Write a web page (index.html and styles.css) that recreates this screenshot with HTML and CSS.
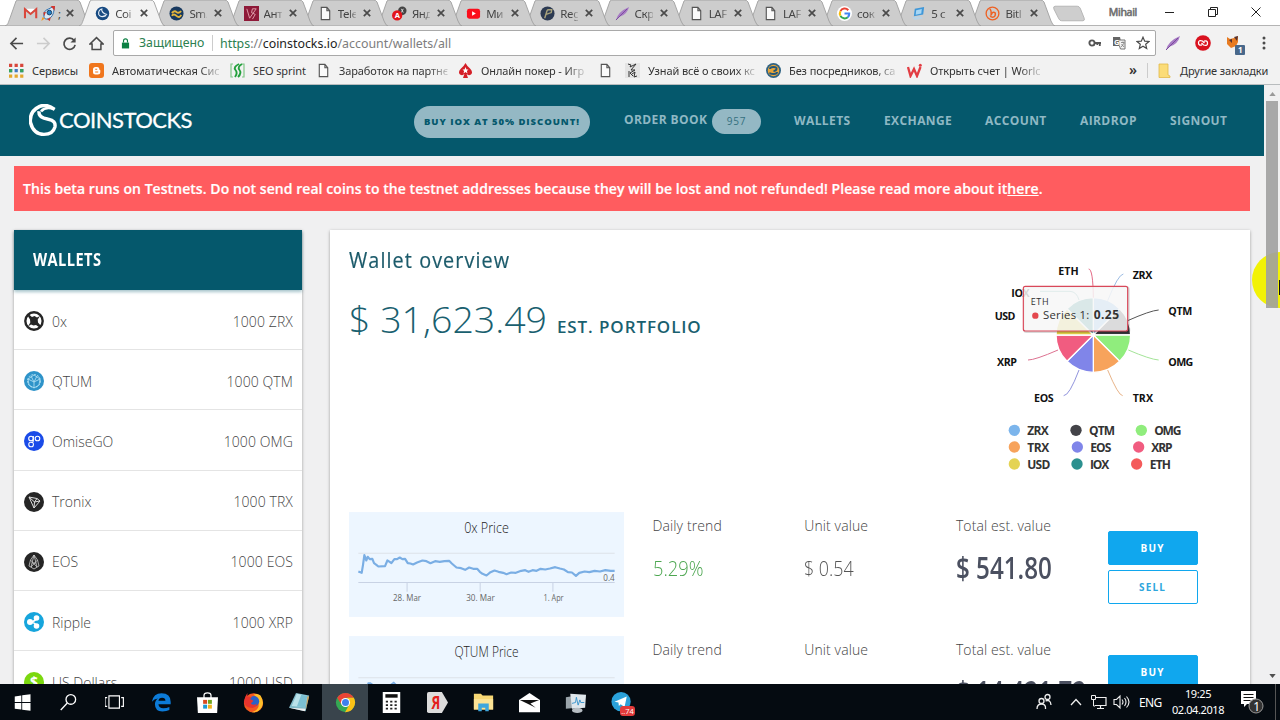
FILE: index.html
```html
<!DOCTYPE html>
<html lang="ru">
<head>
<meta charset="utf-8">
<title>Coinstocks</title>
<link rel="stylesheet" href="styles.css">
</head>
<body>
<svg class="defs" width="0" height="0">
  <symbol id="tab" viewBox="0 0 86 26"><path d="M0 26C3 25 3 23 5 18L11 1Q12 0 14 0H71Q74 0 75 2L82 21Q84 26 86 26Z"/></symbol>
  <symbol id="x" viewBox="0 0 8 8"><path d="M.8.8l6.4 6.4M7.2.8L.8 7.2" stroke="#4a4a4a" stroke-width="1.7"/></symbol>
  <symbol id="doc" viewBox="0 0 16 16"><path d="M3.500 1.500h6l3 3.500v9.500h-9zM9.500 1.500v3.500h3" fill="#fafafa" stroke="#555" stroke-width="1.2"/></symbol>
  <symbol id="feather" viewBox="0 0 16 16"><path d="M1 15Q3 6 15 1Q13 9 5 11.500Z" fill="#a77bc4"/><path d="M1 15L13 3" stroke="#7a4a9d"/></symbol>
</svg>
<div class="browser">
  <div class="tabstrip">
    <div class="tabs">
      <div class="tab"><svg class="shape"><use href="#tab"/></svg><svg class="ico wide" viewBox="0 0 34 16"><path d="M1.500 13V3.500L7.500 8.500 13.500 3.500V13" fill="none" stroke="#d9473c" stroke-width="2.200"/><path d="M3 3h9l-4.500 4z" fill="#fff"/><path d="M22 13Q20 5 27 3L33 0 32 7Q30 14 24 14Z" fill="#dce8f2" stroke="#2b6fae"/><circle cx="27.500" cy="7" r="2.500" fill="#2584c7" stroke="#173b63"/><path d="M29 0l4.500 0-.5 5z" fill="#d8342b"/><path d="M21 7l3-1-2 5zM25 14l4-2-1 4z" fill="#c9352c"/><path d="M20 12l3 1-4 3z" fill="#f49a25"/></svg><span>;</span><svg class="close"><use href="#x"/></svg></div>
      <div class="tab active"><svg class="shape"><use href="#tab"/></svg><svg class="ico" viewBox="0 0 16 16"><circle cx="8" cy="8" r="7.200" fill="#174a82"/><path d="M8 3Q3 4 4 9Q6 13 12 10M7 3Q7 8 13 9" fill="none" stroke="#e5eef7" stroke-width="1.200"/></svg><span>Coi</span><svg class="close"><use href="#x"/></svg></div>
      <div class="tab"><svg class="shape"><use href="#tab"/></svg><svg class="ico" viewBox="0 0 16 16"><circle cx="8" cy="8" r="7.500" fill="#17395f"/><path d="M3 7.500q3-3 5-1t5-1M3 10.500q2-3 5 0t5-1" fill="none" stroke="#e2b43c" stroke-width="2"/></svg><span>Sm.</span><svg class="close"><use href="#x"/></svg></div>
      <div class="tab"><svg class="shape"><use href="#tab"/></svg><svg class="ico" viewBox="0 0 16 16"><path d="M0 0h16v16H0z" fill="#8e1938"/><path d="M3 3l3 10L13 3H9l-1 4 4 2-3 5" fill="none" stroke="#e0a0ad"/></svg><span>Ант</span><svg class="close"><use href="#x"/></svg></div>
      <div class="tab"><svg class="shape"><use href="#tab"/></svg><svg class="ico"><use href="#doc"/></svg><span>Tele</span><svg class="close"><use href="#x"/></svg></div>
      <div class="tab"><svg class="shape"><use href="#tab"/></svg><svg class="ico" viewBox="0 0 16 16"><circle cx="11" cy="5" r="4.500" fill="#444"/><path d="M10 3l2 4M12 3l-2 4" stroke="#ddd"/><circle cx="5.500" cy="10" r="5.500" fill="#e3141b"/><text x="2.800" y="13" font-size="8" fill="#fff" font-weight="700">A</text></svg><span>Янд</span><svg class="close"><use href="#x"/></svg></div>
      <div class="tab"><svg class="shape"><use href="#tab"/></svg><svg class="ico" viewBox="0 0 16 16"><rect x="1" y="3" width="14" height="10.500" rx="2.500" fill="#fb0d1b"/><path d="M6.500 5.500v5l4-2.500z" fill="#fff"/></svg><span>Ми</span><svg class="close"><use href="#x"/></svg></div>
      <div class="tab"><svg class="shape"><use href="#tab"/></svg><svg class="ico" viewBox="0 0 16 16"><circle cx="8" cy="8" r="7.500" fill="#2c3a52"/><path d="M5 13L7.500 5Q8 4 9 4H12.500L12 7 6.500 9" fill="none" stroke="#a8a27c" stroke-width="1.500"/></svg><span>Reg</span><svg class="close"><use href="#x"/></svg></div>
      <div class="tab"><svg class="shape"><use href="#tab"/></svg><svg class="ico"><use href="#feather"/></svg><span>Скр</span><svg class="close"><use href="#x"/></svg></div>
      <div class="tab"><svg class="shape"><use href="#tab"/></svg><svg class="ico"><use href="#doc"/></svg><span>LAF</span><svg class="close"><use href="#x"/></svg></div>
      <div class="tab"><svg class="shape"><use href="#tab"/></svg><svg class="ico"><use href="#doc"/></svg><span>LAF</span><svg class="close"><use href="#x"/></svg></div>
      <div class="tab"><svg class="shape"><use href="#tab"/></svg><svg class="ico" viewBox="0 0 16 16"><circle cx="8" cy="8" r="8" fill="#fff"/><g fill="none" stroke-width="2.200"><path d="M12 4.500A5 5 0 0 0 3.700 5.500" stroke="#ea4335"/><path d="M3.700 5.500a5 5 0 0 0 0 5" stroke="#fbbc05"/><path d="M3.700 10.500A5 5 0 0 0 11.500 12" stroke="#34a853"/><path d="M11.500 12A5 5 0 0 0 13 8H8" stroke="#4285f4"/></g></svg><span>сок</span><svg class="close"><use href="#x"/></svg></div>
      <div class="tab"><svg class="shape"><use href="#tab"/></svg><svg class="ico" viewBox="0 0 16 16"><path d="M4 3l10-2-1 8-10 2z" fill="#3f97d8"/><path d="M5.500 4.500l6-1.200-.5 4.700-6 1.200z" fill="#a7d6f4"/><path d="M1 12l9-1 3 2-9 2z" fill="#b9d3e6"/></svg><span>5 с</span><svg class="close"><use href="#x"/></svg></div>
      <div class="tab"><svg class="shape"><use href="#tab"/></svg><svg class="ico" viewBox="0 0 16 16"><circle cx="8" cy="8" r="6.800" fill="none" stroke="#ee6123" stroke-width="1.400"/><path d="M5 3q2 1 1.500 7Q8 5 11 7.500 11.500 12 8 12 6 12 5.500 10" fill="none" stroke="#ee6123" stroke-width="1.600"/></svg><span>Bitl</span><svg class="close"><use href="#x"/></svg></div>
    </div>
    <svg class="newtab" viewBox="0 0 34 17"><path d="M2 1H25Q27 1 28 3L32 13Q33 16 31 16H9Q7 16 6 14L1 4Q0 1 2 1Z" fill="#cecece" stroke="#b5b5b5"/></svg>
    <div class="winctl"><span class="user">Mihail</span>
      <svg width="12" height="12"><path d="M1 6.500h9" stroke="#222" /></svg>
      <svg width="12" height="12"><path d="M1.500 3.500h7v7h-7zM3.500 3V1.500h7v7H9" fill="none" stroke="#222"/></svg>
      <svg width="12" height="12"><path d="M1.500 1.500l9 9M10.500 1.500l-9 9" stroke="#222"/></svg>
    </div>
  </div>
  <div class="toolbar">
    <div class="navbtns">
      <svg viewBox="0 0 16 16"><path d="M15 8H2.500M8 2L2 8l6 6" fill="none" stroke="#4a4a4a" stroke-width="1.700"/></svg>
      <svg viewBox="0 0 16 16"><path d="M1 8h12.500M8 2l6 6-6 6" fill="none" stroke="#ccc" stroke-width="1.700"/></svg>
      <svg viewBox="0 0 16 16"><path d="M13 4.800A6 6 0 1 0 14 9.500" fill="none" stroke="#4a4a4a" stroke-width="1.800"/><path d="M14.500 1.500v5.500H9z" fill="#4a4a4a"/></svg>
      <svg viewBox="0 0 16 16"><path d="M1 8.500L8 1.700l7 6.800H12.700V14.500H3.300V8.500Z" fill="none" stroke="#4a4a4a" stroke-width="1.600"/></svg>
    </div>
    <div class="omnibox">
      <svg class="lock" viewBox="0 0 10 12"><path d="M1 5h8v6.500H1z" fill="#0b8043"/><path d="M2.800 5V3a2.200 2.200 0 0 1 4.400 0v2" fill="none" stroke="#0b8043" stroke-width="1.300"/></svg>
      <span class="secure">Защищено</span><span class="url"><b>https</b>://<i>coinstocks.io</i>/account/wallets/all</span>
      <div class="omni-icons">
        <svg viewBox="0 0 14 14"><circle cx="4" cy="7" r="2.600" fill="none" stroke="#555" stroke-width="1.900"/><path d="M6.500 7H13M11.800 7v3M9.300 7v2" stroke="#555" stroke-width="1.800"/></svg>
        <svg viewBox="0 0 14 14"><path d="M1 1h7l2 9H1z" fill="#666"/><path d="M7 4h6v9H8.500L7.500 10" fill="#f2f2f2" stroke="#777"/><text x="2" y="8.500" font-size="7.500" font-weight="700" fill="#fff">G</text><path d="M9 6.500h3.500M11 5.500v1M9.200 11l3-4M9.500 8l2.500 3" stroke="#777" stroke-width=".8"/></svg>
        <svg viewBox="0 0 14 14"><path d="M7 1.200l1.700 4 4.300.3-3.300 2.800 1 4.200L7 10.200l-3.700 2.300 1-4.200L1 5.500l4.300-.3z" fill="none" stroke="#4a4a4a" stroke-width="1.200"/></svg>
      </div>
    </div>
    <div class="exts">
      <svg viewBox="0 0 16 16"><use href="#feather"/></svg>
      <svg viewBox="0 0 16 16"><circle cx="8" cy="8" r="7.800" fill="#d9121f"/><path d="M7 9.800Q3.500 11 3.500 7.800T7.500 6l2 2M9 6.200Q12.500 5 12.500 8.200T8.500 10l-2-2" fill="none" stroke="#fff" stroke-width="1.300"/></svg>
      <svg viewBox="0 0 20 20"><path d="M1 2l3 2 4-1 4-2 0 6-2 4-5 2-4-4z" fill="#e77b22"/><path d="M3 5l3-1v4zM8 2l4-1-1 5z" fill="#533"/><rect x="9" y="10" width="10" height="10" rx="1" fill="#48688b"/><text x="12" y="18" font-size="8" font-weight="700" fill="#fff">1</text></svg>
      <svg viewBox="0 0 16 16"><g fill="#4a4a4a"><circle cx="8" cy="3" r="1.500"/><circle cx="8" cy="8" r="1.500"/><circle cx="8" cy="13" r="1.500"/></g></svg>
    </div>
  </div>
  <div class="bookmarks">
    <div class="bm b1"><svg viewBox="0 0 14 14"><g stroke-width="3" stroke-dasharray="3 2.200"><path d="M0 2.200h14" stroke="#d8463b"/><path d="M0 7.200h14" stroke="#3f78c4"/><path d="M0 12.200h14" stroke="#e3a72e"/></g><path d="M0 5.700h3v3H0zM10.400 5.700h3v3h-3z" fill="#35a35b"/></svg><span>Сервисы</span></div>
    <div class="bm b2"><svg viewBox="0 0 15 15"><rect width="15" height="15" rx="3" fill="#f0761d"/><path d="M4 6.500A2.500 2.500 0 0 1 6.500 4H8a2.300 2.300 0 0 1 2.300 2.500l1 .8V9A2.500 2.500 0 0 1 8.800 11.500H6.500A2.500 2.500 0 0 1 4 9z" fill="#fff"/><path d="M6.200 6.300h2M6.200 9h3" stroke="#f0761d" stroke-width="1.100"/></svg><span>Автоматическая Сис</span></div>
    <div class="bm b3"><svg viewBox="0 0 15 15"><path d="M3 1H1v13h2M12 1h2v13h-2" fill="none" stroke="#80c587" stroke-width="1.200"/><path d="M9 1Q3 4 5.500 7T5 14M12 1Q7 4 9.500 7T8 14" fill="none" stroke="#23a03c" stroke-width="1.900"/></svg><span>SEO sprint</span></div>
    <div class="bm b4"><svg><use href="#doc"/></svg><span>Заработок на партнє</span></div>
    <div class="bm b5"><svg viewBox="0 0 15 15"><path d="M7.500 0Q9 3 12 5.500 15.500 9 13 11.500 10.500 13 8.600 11L10 15H5l1.400-4Q4.500 13 2 11.500-.5 9 3 5.500 6 3 7.500 0z" fill="#d41f27"/><path d="M7.500 4l1 2.500h2l-1.600 1.600.6 2.400-2-1.400-2 1.400.6-2.400L4.500 6.500h2z" fill="#fff"/></svg><span>Онлайн покер - Игр</span></div>
    <div class="bm b6"><svg><use href="#doc"/></svg></div>
    <div class="bm b7"><svg viewBox="0 0 15 15"><path d="M0 0h15v15H0z" fill="#e4e4e4"/><path d="M3 1l3 1-1 2 6-3-5 6 4 0-5 3 3 3M4 8v6M7 11l3-2-1 5 3-1" fill="none" stroke="#333" stroke-width="1"/></svg><span>Узнай всё о своих кс</span></div>
    <div class="bm b8"><svg viewBox="0 0 15 15"><circle cx="7.500" cy="7.500" r="7.500" fill="#2f6384"/><circle cx="7.500" cy="7.500" r="5.700" fill="#e8a53a"/><path d="M4 6q0-2 3.500-2t3 2-3 2M11 9q0 2-3.500 2T4 9.500" fill="none" stroke="#235778" stroke-width="2"/></svg><span>Без посредников, са</span></div>
    <div class="bm b9"><svg viewBox="0 0 15 15"><path d="M1 4l2.500 9L7 6l3 7 3.500-9" fill="none" stroke="#e23d43" stroke-width="2.300"/><circle cx="13.300" cy="2.300" r="1.500" fill="#e23d43"/></svg><span>Открыть счет | Worlc</span></div>
    <div class="more">»</div>
    <div class="bm b10"><svg viewBox="0 0 15 15"><path d="M2 1h9v11l2 1v1.500H2z" fill="#fbdc78" stroke="#e2b94a" stroke-width=".8"/></svg><span>Другие закладки</span></div>
  </div>

  <div class="viewport">
    <div class="page">
      <header class="site">
        <div class="logo"><svg viewBox="0 0 90 100"><path d="M77 16Q55-1 32 7 0 22 4 56 13 92 45 92 72 92 78 70 82 50 58 46L45 43Q28 37 30 22" fill="none" stroke="#fff" stroke-width="10.500"/><path d="M77 16Q50 6 36 22" fill="none" stroke="#fff" stroke-width="8"/></svg><span>COINSTOCKS</span></div>
        <nav><a class="promo"><span>BUY IOX AT 50% DISCOUNT!</span></a><a class="ob"><span>ORDER BOOK</span><em>957</em></a><a class="n1">WALLETS</a><a class="n2">EXCHANGE</a><a class="n3">ACCOUNT</a><a class="n4">AIRDROP</a><a class="n5">SIGNOUT</a></nav>
      </header>
      <div class="alert"><span>This beta runs on Testnets. Do not send real coins to the testnet addresses because they will be lost and not refunded! Please read more about it<u>here</u>.</span></div>
      <div class="cols">
        <aside>
          <h2><span>WALLETS</span></h2>
          <div class="w"><svg viewBox="0 0 20 20"><circle cx="10" cy="10" r="8.700" fill="#fff" stroke="#262626" stroke-width="2.400"/><path d="M3.500 4.500L5 3.500 8 6 10.500 5 13 6.500 16 5 13.700 8.500 14 11.500 17 15 15.500 16.500 12 14 9.500 14.500 7 13.500 4 15.500 6.300 11.500 6 8.500z" fill="#262626"/></svg><span>0x</span><b>1000 ZRX</b></div>
          <div class="w"><svg viewBox="0 0 20 20"><circle cx="10" cy="10" r="10" fill="#2e93c9"/><g fill="none" stroke="#a9dcf2" stroke-width=".9"><circle cx="10" cy="10" r="6.500" stroke-dasharray="2 1"/><path d="M4 8l6-4 6 4-1 6-5 3-5-3zM4 8l6 3 6-3M10 11v6M7 5l3 6 3-6"/></g></svg><span>QTUM</span><b>1000 QTM</b></div>
          <div class="w"><svg viewBox="0 0 20 20"><circle cx="10" cy="10" r="10" fill="#1a4be8"/><g fill="none" stroke="#fff" stroke-width="1.100"><circle cx="7" cy="7.500" r="2.300"/><circle cx="13.500" cy="7.500" r="2.300"/><rect x="4.800" y="11.300" width="4.600" height="4.500" rx="2"/><path d="M9.300 5v5q0 1.500-2 1.500"/></g></svg><span>OmiseGO</span><b>1000 OMG</b></div>
          <div class="w"><svg viewBox="0 0 20 20"><circle cx="10" cy="10" r="10" fill="#252525"/><path d="M5 5l8 1.500 3 2.500-6 7zM5 5l5.500 5L10 16M10.500 10L13 6.500M10.500 10L16 9" fill="none" stroke="#ddd" stroke-width="1"/></svg><span>Tronix</span><b>1000 TRX</b></div>
          <div class="w"><svg viewBox="0 0 20 20"><circle cx="10" cy="10" r="10" fill="#252525"/><path d="M10 3l-3.500 5L5 14l5 3 5-3-1.500-6zM10 3L7 15M10 3l3 12M6.500 8L13 15M13.500 8L7 15M8 11h4" fill="none" stroke="#ccc" stroke-width=".8"/></svg><span>EOS</span><b>1000 EOS</b></div>
          <div class="w"><svg viewBox="0 0 20 20"><circle cx="10" cy="10" r="10" fill="#16a5dc"/><g fill="#fff"><circle cx="6" cy="10" r="3"/><circle cx="12.500" cy="6" r="2.800"/><circle cx="12.500" cy="14" r="2.800"/></g><path d="M12.300 6Q11.500 9.500 6 10q5.500.5 6.300 4" fill="none" stroke="#fff" stroke-width="1.500"/></svg><span>Ripple</span><b>1000 XRP</b></div>
          <div class="w"><svg viewBox="0 0 20 20"><circle cx="10" cy="10" r="10" fill="#7bd80f"/><text x="6" y="15" font-size="14" font-weight="700" fill="#fff">$</text></svg><span>US Dollars</span><b>1000 USD</b></div>
        </aside>
        <main>
          <section class="overview">
            <div class="sum"><h1><span>Wallet overview</span></h1><div class="total"><span class="amt">$ 31,623.49</span><span class="est">EST. PORTFOLIO</span></div></div>
            <svg class="pie" viewBox="0 0 840 690">
              <g stroke="#fff" stroke-width="4">
                <path d="M400 255V143A112 112 0 0 1 479 176Z" fill="#7cb5ec"/><path d="M400 255L479 176A112 112 0 0 1 512 255Z" fill="#35353a"/><path d="M400 255H512A112 112 0 0 1 479 334Z" fill="#90ed7d"/><path d="M400 255L479 334A112 112 0 0 1 400 367Z" fill="#f7a35c"/><path d="M400 255V367A112 112 0 0 1 321 334Z" fill="#8085e9"/><path d="M400 255L321 334A112 112 0 0 1 288 255Z" fill="#f15c80"/><path d="M400 255H288A112 112 0 0 1 321 176Z" fill="#dcca45"/><path d="M400 255L321 176A112 112 0 0 1 400 143Z" fill="#2b908f"/>
              </g>
              <g fill="none" stroke-width="3"><path d="M386 57Q399 57 400 143" stroke="#e46a86"/><path d="M490 72Q474 74 443 152" stroke="#9dbde4"/><path d="M596 180Q570 182 503 212" stroke="#555"/><path d="M596 330Q570 328 505 300" stroke="#a4e498"/><path d="M488 437Q475 437 443 360" stroke="#e8b489"/><path d="M311 437Q328 437 357 360" stroke="#9194dd"/><path d="M204 330Q225 330 294 300" stroke="#dd7291"/><path d="M240 124H330Q350 125 357 150" stroke="#5aa5a4"/></g>
              <g class="plab"><text x="295" y="74" textLength="61">ETH</text><text x="518" y="88" textLength="59">ZRX</text><text x="154" y="142" textLength="55">IOX</text><text x="104" y="210" textLength="62">USD</text><text x="625" y="195" textLength="72">QTM</text><text x="111" y="348" textLength="60">XRP</text><text x="625" y="348" textLength="75">OMG</text><text x="222" y="455" textLength="59">EOS</text><text x="518" y="455" textLength="61">TRX</text></g>
              <rect x="193" y="112" width="313" height="134" rx="6" fill="none" stroke="#000" stroke-opacity=".15" stroke-width="6"/>
              <rect x="190" y="109" width="313" height="134" rx="6" fill="#f7f7f7" fill-opacity=".86" stroke="#d9485a" stroke-width="3.500"/>
              <text x="212" y="164" font-size="27" fill="#333" textLength="54">ETH</text><circle cx="226" cy="197" r="9.500" fill="#e4484e"/><text x="249" y="206" font-size="34" fill="#333" textLength="139">Series 1:</text><text x="401" y="206" font-size="36" font-weight="700" fill="#333" textLength="76">0.25</text>
              <g><circle cx="163" cy="541" r="17" fill="#7cb5ec"/><circle cx="348" cy="541" r="17" fill="#434348"/><circle cx="544" cy="541" r="17" fill="#90ed7d"/><circle cx="163" cy="591" r="17" fill="#f7a35c"/><circle cx="352" cy="591" r="17" fill="#8085e9"/><circle cx="536" cy="591" r="17" fill="#f15c80"/><circle cx="163" cy="642" r="17" fill="#e4d354"/><circle cx="351" cy="642" r="17" fill="#2b908f"/><circle cx="530" cy="642" r="17" fill="#f45b5b"/></g>
              <g class="pleg"><text x="202" y="555" textLength="64">ZRX</text><text x="387" y="555" textLength="78">QTM</text><text x="583" y="555" textLength="81">OMG</text><text x="202" y="605" textLength="66">TRX</text><text x="391" y="605" textLength="63">EOS</text><text x="574" y="605" textLength="64">XRP</text><text x="202" y="656" textLength="69">USD</text><text x="390" y="656" textLength="58">IOX</text><text x="569" y="656" textLength="64">ETH</text></g>
            </svg>
          </section>
          <section class="coin">
            <svg class="chart" viewBox="28 37 824 314"><rect x="28" y="37" width="824" height="314" fill="#edf6ff"/>
              <text class="ct" x="373" y="99" textLength="134" lengthAdjust="spacingAndGlyphs">0x Price</text>
              <path d="M56 160.500H824" stroke="#dde2e8" stroke-width="3"/><path d="M56 248H824M202 248v28M421 248v28M639 248v28" stroke="#c8d2e4" stroke-width="3" fill="none"/>
              <path d="M56 215L66 219 70 195 74 166 80 182 84 171 90 178 98 177 103 190 110 195 116 200 136 199 143 182 150 186 155 190 164 178 172 178 180 173 188 178 196 177 204 190 212 191 220 194 232 188 248 182 260 184 272 190 286 184 300 186 314 184 328 183 336 191 350 203 364 205 376 210 388 203 400 207 412 207 420 216 428 222 440 227 452 217 464 212 476 216 490 219 500 223 514 218 528 219 544 213 556 211 566 216 578 211 590 213 602 207 616 209 630 206 646 202 660 206 672 209 684 217 696 218 708 228 718 219 734 215 748 217 764 213 780 215 796 211 812 213 824 213" fill="none" stroke="#7aaee4" stroke-width="6.500" stroke-linejoin="round"/>
              <g class="cx"><text x="790" y="242" textLength="34" lengthAdjust="spacingAndGlyphs">0.4</text><text x="160" y="302" textLength="84" lengthAdjust="spacingAndGlyphs">28. Mar</text><text x="379" y="302" textLength="86" lengthAdjust="spacingAndGlyphs">30. Mar</text><text x="611" y="302" textLength="60" lengthAdjust="spacingAndGlyphs">1. Apr</text></g></svg>
            <div class="c1"><label>Daily trend</label><span class="v gain">5.29%</span></div>
            <div class="c1"><label>Unit value</label><span class="v">$ 0.54</span></div>
            <div class="c1"><label>Total est. value</label><span class="v big">$ 541.80</span></div>
            <div class="btns"><a class="buy">BUY</a><a class="sell">SELL</a></div>
          </section>
          <section class="coin">
            <svg class="chart" viewBox="28 37 824 314"><rect x="28" y="37" width="824" height="314" fill="#edf6ff"/>
              <text class="ct" x="344" y="99" textLength="192" lengthAdjust="spacingAndGlyphs">QTUM Price</text><path d="M56 162H824" stroke="#dde2e8" stroke-width="3"/><path d="M70 215L86 178 92 178 110 190 150 185 162 176 176 190" fill="none" stroke="#7aaee4" stroke-width="5"/></svg>
            <div class="c1"><label>Daily trend</label></div>
            <div class="c1"><label>Unit value</label></div>
            <div class="c1"><label>Total est. value</label><span class="v big b2v">$ 14,421.72</span></div>
            <div class="btns"><a class="buy">BUY</a><a class="sell">SELL</a></div>
          </section>
        </main>
      </div>
    </div>
    <div class="scroll"><svg viewBox="0 0 8 5"><path d="M0 5l4-5 4 5z" fill="#999"/></svg><div class="thumb"></div><svg class="dn" viewBox="0 0 8 5"><path d="M0 0l4 5 4-5z" fill="#505050"/></svg></div>
    <div class="halo"></div><div class="cursor"></div>
  </div>
</div>
<footer class="taskbar">
  <div class="apps">
    <div><svg viewBox="0 0 24 24"><path d="M2 5l7.500-1.100v7.600H2zM10.500 3.800L20 2.500v9h-9.500zM2 12.500h7.500v7.600L2 19zM10.500 12.500H20v9l-9.500-1.300z" fill="#fff"/></svg></div>
    <div><svg viewBox="0 0 24 24"><circle cx="13.500" cy="8.500" r="5.500" fill="none" stroke="#fff" stroke-width="1.500"/><path d="M9.500 12.500L2 20.500" stroke="#fff" stroke-width="1.500"/></svg></div>
    <div><svg viewBox="0 0 24 24"><path d="M4.500 4.500h12v14h-12zM2.500 6.500h-2.500v10h2.500M18.500 6.500h2.500v10h-2.500" fill="none" stroke="#fff" stroke-width="1.300"/></svg></div>
    <div><svg viewBox="0 0 24 24"><path d="M1 11Q3 1.500 12 1.500q10.500 0 10.500 10v2.500H8.500q.5 4.500 5.500 4.500 4 0 7-1.500V20.500q-3 1.700-8 1.700-8.500-.2-8.500-8.200Q4.500 9.500 8 7.300 3.500 8 1 11zM8.500 10h8Q16.500 6.500 12.700 6.500T8.500 10z" fill="#0c7bd8"/></svg></div>
    <div><svg viewBox="0 0 24 24"><path d="M8 7V4q0-3 4-3t4 3v3" fill="none" stroke="#fff" stroke-width="1.400"/><path d="M0 6h24l-1 18H1z" fill="#fff"/><path d="M7 9h4.500v4.500H7z" fill="#d94a20"/><path d="M12.500 9H17v4.500h-4.500z" fill="#6fa51c"/><path d="M7 14.500h4.500V19H7z" fill="#1c9ad6"/><path d="M12.500 14.500H17V19h-4.500z" fill="#f0b31c"/></svg></div>
    <div><svg viewBox="0 0 24 24"><circle cx="12" cy="12.500" r="11" fill="#f4581f"/><path d="M20 4q5 8 1 14-4 6-11 5 8-2 8-9 0-8-6-11 5-2 8 1z" fill="#ffbf2a"/><circle cx="12.500" cy="10.500" r="6" fill="#2a62c9"/><path d="M1 11Q2 5 5 1v4q3 0 5 1l-2 2 4 2-3 3q3 3 7 0-1 6-7 5-7-1-8-7z" fill="#e9342d"/></svg></div>
    <div><svg viewBox="0 0 24 24"><path d="M8 1l15 3-4 18L0 18z" fill="#7fb9c8"/><path d="M9 2l12 2.500-3 13L3 16z" fill="#b9e1e9"/><path d="M14 3l7 1.500-3 13-9-1z" fill="#7cc0d2"/><path d="M0 18l18 4 1-3z" fill="#eee"/><path d="M21 5l2 0-4 16z" fill="#d1a35a"/></svg></div>
    <div class="on"><svg viewBox="0 0 24 24"><circle cx="12" cy="12" r="11" fill="#35a853"/><path d="M2.500 6.500A11 11 0 0 1 21.500 6.700H12L7.500 14.500z" fill="#ea4335"/><path d="M21.500 6.700A11 11 0 0 1 11.500 23L16.500 14 14 6.700z" fill="#fbc116"/><circle cx="12" cy="12" r="5.200" fill="#fff"/><circle cx="12" cy="12" r="4" fill="#3f80ec"/></svg></div>
    <div><svg viewBox="0 0 24 24"><path d="M2 0h20v24H2z" fill="#fff"/><path d="M5 2.500h14v4H5z" fill="#111"/><path d="M5.500 11h14M5.500 15h14M5.500 19h14" stroke="#222" stroke-width="2.200" stroke-dasharray="2.500 2.500"/></svg></div>
    <div><svg viewBox="0 0 24 24"><path d="M2 0h15l7 12-7 12H2Q0 24 0 22V2Q0 0 2 0z" fill="#dcdcdc"/><text x="5" y="19.500" font-size="20" font-weight="700" fill="#e3201b" textLength="10" lengthAdjust="spacingAndGlyphs">Я</text></svg></div>
    <div><svg viewBox="0 0 24 24"><path d="M1 2h8l2 2h12v16H1z" fill="#f7d774"/><path d="M1 8h22v12H1z" fill="#fce395"/><path d="M6 22v-9h12v9h-4v-4h-4v4z" fill="#3ea6dd"/></svg></div>
    <div><svg viewBox="0 0 24 24"><path d="M0 9l12-8 12 8v14H0z" fill="#fff"/><path d="M1 9h22l-10 4 6 5-8-4z" fill="#111"/></svg></div>
    <div><svg viewBox="0 0 24 24"><path d="M1 6l12-2 1 14-13 1z" fill="#9aa4aa"/><path d="M6 2l18 1-1 15-15 1z" fill="#dfe7ec"/><path d="M8 13l4-1 1-6 2 9 2-6 1 3h4" fill="none" stroke="#2f8fc9"/><ellipse cx="14" cy="21" rx="6" ry="3" fill="#b7bec3"/></svg></div>
    <div><svg viewBox="0 0 24 24"><circle cx="11.500" cy="11" r="11" fill="#2aa1da"/><path d="M4 11l14-6-2.500 12-4.500-3-2 2-.5-4z" fill="#fff"/></svg><span class="badge">..74</span></div>
  </div>
  <div class="tray">
    <svg width="18" height="18" viewBox="0 0 18 18"><g fill="none" stroke="#eee" stroke-width="1.300"><circle cx="6.500" cy="8" r="2.500"/><path d="M2 16q0-5 4.500-5t4 5"/><circle cx="12.500" cy="4" r="2.500"/><path d="M10.500 8q5-2 5.500 4"/></g></svg>
    <svg class="up" width="12" height="8"><path d="M1 7l5-5.500L11 7" fill="none" stroke="#eee" stroke-width="1.300"/></svg>
    <svg width="16" height="16" viewBox="0 0 16 16"><path d="M4 3.500h11v8H4M9.500 12v2.500M6 14.500h7" fill="none" stroke="#eee" stroke-width="1.200"/><path d="M.5 1.500h4v4h-4zM2.500 5v7H4" fill="none" stroke="#eee"/></svg>
    <svg width="17" height="16" viewBox="0 0 17 16"><path d="M1 5.500h2.500L7 2v12l-3.500-3.500H1zM9 5.500q2 2.500 0 5M11.500 4q3 4 0 8M13.500 2.500q5 5.500 0 11" fill="none" stroke="#eee" stroke-width="1.100"/></svg>
    <span class="lang">ENG</span>
    <div class="clock"><span>19:25</span><span class="date">02.04.2018</span></div>
    <svg width="24" height="24" viewBox="0 0 24 24"><path d="M1 1h15v13H7l-3 3v-3H1z" fill="#fff"/><path d="M3.500 4.500h10M3.500 7.500h10M3.500 10.500h7" stroke="#111" stroke-width="1.200"/><circle cx="16" cy="16" r="7" fill="#333" stroke="#999"/><text x="13.200" y="20.500" font-size="12" fill="#fff">1</text></svg>
    <i class="peek"></i>
  </div>
</footer>
</body>
</html>
```
FILE: styles.css
```css
* { box-sizing: border-box; }
body { margin: 0; width: 1280px; height: 720px; overflow: hidden; font-family: "Open Sans", "Noto Sans", sans-serif; background: #f2f2f2; white-space: nowrap; }
svg { display: block; flex: none; }
.defs { position: absolute; }
.browser { height: 684px; display: flex; flex-direction: column; overflow: hidden; }

/* tab strip */
.tabstrip { height: 26px; display: flex; background: #fff; border-bottom: 1px solid #b4b4b4; }
.tabs { display: flex; padding-left: 5px; width: 1056px; }
.tab { position: relative; flex: 0 0 74.2px; height: 26px; display: flex; align-items: center; padding-left: 17px; padding-left: 18px; font: 11.500px "Noto Sans", sans-serif; color: #444; letter-spacing: -.4px; }
.tab:nth-child(n+2) { padding-left: 16px; }
.tab .shape { position: absolute; left: 0; top: 0; width: 86px; height: 26px; fill: #cdcdcd; stroke: #9f9f9f; stroke-width: .9; }
.tab.active .shape { fill: #f2f2f2; }
.tab .ico, .tab span, .tab .close { position: relative; }
.tab .ico { width: 15px; height: 15px; }
.tab .ico.wide { width: 35px; margin-left: -1px; height: 15px; }
.tab span { width: 18px; margin-left: 5px; -webkit-mask-image: linear-gradient(90deg, #000 60%, rgba(0,0,0,.25)); }
.tab .wide + span { width: 3px; margin-left: 1px; -webkit-mask-image: none; }
.tab .wide ~ .close { margin-left: 5px; }
.tab .close { width: 8px; height: 8px; margin-left: 7px; }
.tab:nth-child(1) { z-index: 19; } .tab:nth-child(2) { z-index: 20; } .tab:nth-child(3) { z-index: 18; } .tab:nth-child(4) { z-index: 17; }
.tab:nth-child(5) { z-index: 16; } .tab:nth-child(6) { z-index: 15; } .tab:nth-child(7) { z-index: 14; } .tab:nth-child(8) { z-index: 13; }
.tab:nth-child(9) { z-index: 12; } .tab:nth-child(10) { z-index: 11; } .tab:nth-child(11) { z-index: 10; } .tab:nth-child(12) { z-index: 9; }
.tab:nth-child(13) { z-index: 8; } .tab:nth-child(14) { z-index: 7; }
.newtab { width: 33px; height: 17px; margin: 5px 0 0 -3px; }
.winctl { flex: 1; display: flex; align-items: center; justify-content: flex-end; gap: 31px; padding: 0 18px 2px 0; }
.user { font: 10.500px "Noto Sans", sans-serif; color: #555; letter-spacing: -.3px; -webkit-text-stroke: .6px #777; margin-right: -4px; }

/* toolbar */
.toolbar { height: 32px; display: flex; align-items: center; padding-top: 2px; }
.navbtns { display: flex; gap: 11.500px; padding-left: 9px; width: 113px; }
.navbtns svg { width: 15px; height: 15px; }
.omnibox { width: 1043px; height: 26px; border: 1px solid #a9a9a9; border-radius: 2px; background: #fff; display: flex; align-items: center; padding-left: 7px; font: 13px "Noto Sans", sans-serif; color: #7d7d7d; }
.lock { width: 9px; height: 11px; }
.secure { width: 75px; margin-left: 8px; padding-left: 1px; border-right: 1px solid #ccc; line-height: 16px; color: #2c8150; font-size: 12.300px; }
.url { margin-left: 7px; font-size: 12.400px; }
.url b { font-weight: 400; color: #2c8150; }
.url i { font-style: normal; color: #222; }
.omni-icons { margin-left: auto; display: flex; gap: 10px; padding-right: 5px; }
.omni-icons svg { width: 14px; height: 14px; }
.exts { display: flex; padding-left: 9px; align-items: center; }
.exts svg { width: 16px; height: 16px; margin-right: 14px; }
.exts svg:nth-child(3) { width: 20px; height: 20px; margin: 4px 10px 0 1px; }
.exts svg:nth-child(4) { margin: 0; width: 16px; }

/* bookmarks */
.bookmarks { height: 27px; display: flex; align-items: center; padding: 0 0 2px 9px; font: 11px "Noto Sans", sans-serif; color: #333; border-bottom: 1px solid #b8bcbe; }
.bm { flex: none; display: flex; align-items: center; gap: 8px; }
.bm svg { width: 15px; height: 15px; }
.bm span { letter-spacing: -.1px; }
.b2 span, .b4 span, .b5 span, .b7 span, .b8 span, .b9 span { -webkit-mask-image: linear-gradient(90deg, #000 82%, rgba(0,0,0,.2)); }
.b1 { width: 80px; } .b2 { width: 141px; } .b3 { width: 86px; } .b4 { width: 142px; } .b5 { width: 140px; }
.b6 { width: 27px; } .b7 { width: 141px; } .b8 { width: 141px; } .b9 { width: 222px; } .b10 { padding-left: 9px; border-left: 1px solid #ccc; gap: 8px; }
.more { width: 18px; font-size: 14px; font-weight: 600; line-height: 14px; }

/* page */
.viewport { position: relative; flex: 1; display: flex; background: #f0f0f1; min-height: 0; }
.page { width: 1264px; overflow: hidden; }
.site { height: 71px; background: #05586c; display: flex; align-items: center; justify-content: space-between; padding: 0 37px 0 29px; }
.logo { display: flex; align-items: center; color: #fff; font: 22px Lato, sans-serif; }
.logo svg { width: 30px; height: 33px; }
.logo span { letter-spacing: -.5px; -webkit-text-stroke: .3px #fff; line-height: 22px; margin-bottom: 1px; }
nav { display: flex; align-items: center; gap: 34px; font-size: 12px; font-weight: 700; color: #8fb8c4; letter-spacing: .4px; height: 71px; padding-bottom: 1px; }
nav a { display: flex; align-items: center; }
nav .promo { width: 176px; height: 32px; border-radius: 16px; background: #94b8c4; color: #05586c; font-size: 9.500px; font-weight: 800; justify-content: center; letter-spacing: .95px; margin-top: 3px; }
.ob { width: 137px; margin-right: -1px; }
.ob span { margin-bottom: 1px; }
.ob em { margin-left: auto; width: 49px; height: 25px; border-radius: 13px; background: #94b8c4; color: #35707f; font: 10px/25px "Open Sans", sans-serif; text-align: center; letter-spacing: .8px; margin-top: 2px; }
.n1 { width: 56px; } .n2 { width: 67px; } .n3 { width: 61px; } .n4 { width: 56px; } .n5 { width: 57px; }
.alert { margin: 10px 14px 0 14px; height: 45px; background: #ff5c5f; color: #fff; font-size: 14px; font-weight: 600; line-height: 45px; padding-left: 9px; letter-spacing: .058px; -webkit-text-stroke: .2px #fff; }
.cols { display: flex; gap: 28px; margin: 19px 14px 0; align-items: flex-start; }
aside { width: 288px; background: #fff; box-shadow: 0 1px 3px rgba(0,0,0,.35); }
h2, h1 { margin: 0; }
h2 { height: 60px; background: #05586c; color: #fff; font-size: 17px; line-height: 59px; padding-left: 19px; box-shadow: 0 2px 3px rgba(5,88,108,.35); }
h2 span, h1 span, .v { display: inline-block; transform-origin: 0 50%; }
h2 span { transform: scaleX(.86); letter-spacing: .5px; }
.w { height: 60.200px; border-bottom: 1.500px solid #e4e4e4; display: flex; align-items: center; padding: 3px 9px 0 10px; font-size: 14px; font-weight: 300; color: #444; }
.w svg { width: 20px; height: 20px; margin-right: 8px; }
.w span { flex: 1; }
.w b { font-weight: 300; letter-spacing: .1px; }
main { width: 920px; height: 600px; background: #fff; box-shadow: 0 1px 3px rgba(0,0,0,.35); padding-left: 19px; }
.overview { height: 282px; display: flex; justify-content: space-between; }
h1 { color: #1b5a6a; font-size: 22px; font-weight: 500; line-height: 30px; padding-top: 14px; }
h1 span { transform: scaleX(.9); letter-spacing: 1.200px; -webkit-text-stroke: .2px #1b5a6a; }
.total { display: flex; align-items: baseline; color: #19606f; margin-top: 17px; }
.amt { font-size: 37.500px; font-weight: 300; line-height: 56px; }
.est { font-size: 17px; font-weight: 600; margin-left: 10px; letter-spacing: .9px; }
.pie { width: 280px; height: 230px; margin-top: 20px; margin-right: 10px; }
.pie text { font-family: "Open Sans", sans-serif; }
.plab { font-size: 32px; font-weight: 700; fill: #111; }
.pleg { font-size: 36px; font-weight: 700; fill: #333; }
.coin { height: 124px; display: flex; }
.chart { width: 275px; height: 105px; margin-right: 28.500px; }
.ct { font: 300 45px "Open Sans", sans-serif; fill: #222; }
.cx { font: 29px "Open Sans", sans-serif; fill: #666; }
.c1 { width: 151.700px; display: flex; flex-direction: column; align-items: flex-start; color: #555; }
.c1 label { font-size: 14px; font-weight: 300; line-height: 20px; padding-top: 4px; color: #444; letter-spacing: .12px; }
.v { font-size: 21px; font-weight: 300; line-height: 36px; margin-top: 14px; transform: scaleX(.85); }
.gain { color: #4ca650; transform: scaleX(.87); }
.big { font-size: 31px; font-weight: 600; color: #4b5060; transform: scaleX(.78); margin-top: 13px; }
.btns { display: flex; flex-direction: column; gap: 5px; padding-top: 18.500px; width: 90px; }
.btns a { height: 34px; border: 1px solid #10a7ee; border-radius: 2px; font-size: 10px; font-weight: 700; letter-spacing: 1.200px; text-align: center; line-height: 32px; }
.buy { background: #10a7ee; color: #fff; }
.sell { color: #2ea6dd; }
.scroll { width: 16px; display: flex; flex-direction: column; align-items: center; padding-top: 7px; z-index: 2; }
.scroll svg { width: 7px; height: 4px; }
.thumb { width: 12px; height: 207px; margin-top: 5px; background: rgba(160,160,160,.9); }
.scroll .dn { margin: auto 0 6px; }
.halo { position: absolute; left: 1252px; top: 167px; width: 56px; height: 56px; border-radius: 50%; background: #f2f205; z-index: 1; }
.cursor { position: absolute; left: 1279px; top: 195px; width: 1px; height: 15px; background: #111; z-index: 3; }

/* taskbar */
.taskbar { height: 36px; background: #050b11; display: flex; justify-content: space-between; color: #fff; }
.apps { display: flex; }
.apps div { width: 46px; height: 36px; display: grid; place-items: center; position: relative; }
.apps svg { width: 21px; height: 21px; }
.apps .on { background: #39444c; }
.badge { position: absolute; left: 22px; top: 22px; height: 10px; width: 15px; border-radius: 3px; background: #e23b3b; font-size: 7.500px; line-height: 10px; text-align: center; }
.tray { display: flex; align-items: center; font: 12px "Noto Sans", sans-serif; }
.tray .up { margin: 0 9px 0 17px; }
.tray svg:nth-child(3) { margin-right: 6px; }
.lang { margin-left: 9px; letter-spacing: -.6px; width: 33px; }
.clock { width: 52px; display: flex; flex-direction: column; align-items: center; font-size: 11px; line-height: 16.500px; letter-spacing: -.4px; margin-right: 16px; }
.peek { width: 1px; height: 36px; background: #555; margin: 0 4px 0 11px; }
```
